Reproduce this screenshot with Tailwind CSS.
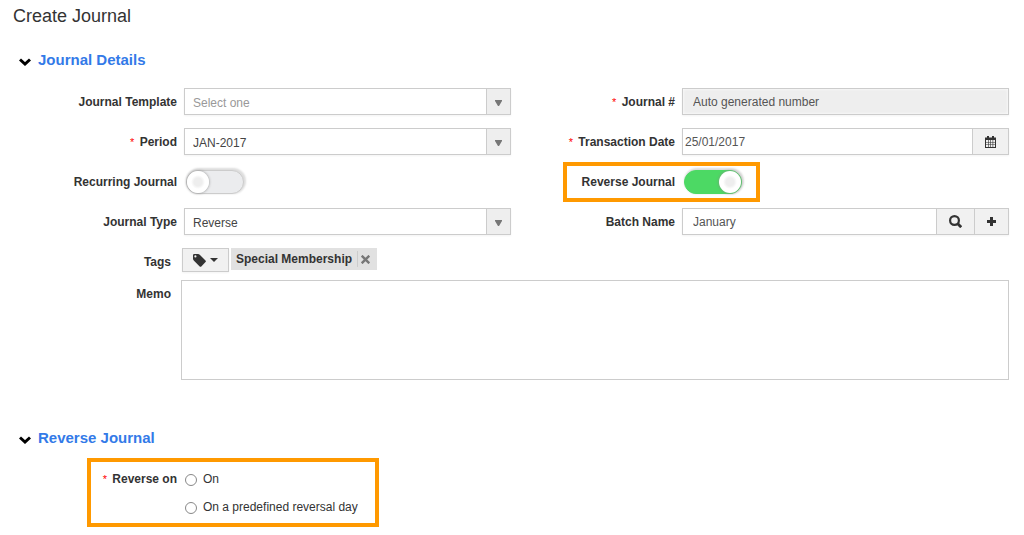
<!DOCTYPE html>
<html lang="en">
<head>
    <meta charset="UTF-8">
    <meta name="viewport" content="width=device-width, initial-scale=1.0">
    <title>Create Journal</title>
    <script src="https://cdn.jsdelivr.net/npm/@tailwindcss/browser@4"></script>
</head>
<body class="bg-white pl-[13px] pr-[15px] font-['Liberation_Sans',Arial,sans-serif] text-xs text-[#333]">

    <h1 class="pt-1 text-lg leading-6">Create Journal</h1>

    <form>
        <!-- Journal Details -->
        <h2 class="mt-5 pl-1.5">
            <button type="button" class="flex items-center gap-[7px] text-[15px] leading-6 font-bold text-[#337ae8]">
                <svg class="mt-1 w-3 h-2" viewBox="0 0 12 8" fill="none" stroke="#000" stroke-width="3"><path d="M1 1.500l5 4.500 5-4.500"/></svg>
                Journal Details
            </button>
        </h2>

        <div class="mt-4 grid grid-cols-2 gap-y-[13px]">
            <div class="flex items-center gap-[7px]">
                <label for="template" class="w-[164px] shrink-0 text-right font-bold">Journal Template</label>
                <div class="relative flex-1">
                    <select id="template" class="block w-full h-[27px] appearance-none border border-[#ccc] bg-white pl-2 pt-0.5 pr-8 text-[#999] shadow-xs">
                        <option>Select one</option>
                    </select>
                    <span class="pointer-events-none absolute inset-y-px right-px flex w-6 items-center justify-center border-l border-[#ccc] bg-[#eee] pt-0.5">
                        <svg class="w-[7px] h-[6px]" viewBox="0 0 7 6" fill="#777"><path d="M0 0h7v1L4 6H3L0 1z"/></svg>
                    </span>
                </div>
            </div>
            <div class="flex items-center gap-[7px]">
                <label for="number" class="w-[164px] shrink-0 text-right font-bold"><span class="mr-0.5 text-[11px] font-normal text-[#f00]">*</span> Journal #</label>
                <input id="number" type="text" value="Auto generated number" readonly class="h-[27px] min-w-0 flex-1 border border-[#ccc] bg-[#eee] px-2.5 text-[#555] shadow-xs inset-shadow-[0_0_3px_#fff]">
            </div>

            <div class="flex items-center gap-[7px]">
                <label for="period" class="w-[164px] shrink-0 text-right font-bold"><span class="mr-0.5 text-[11px] font-normal text-[#f00]">*</span> Period</label>
                <div class="relative flex-1">
                    <select id="period" class="block w-full h-[27px] appearance-none border border-[#ccc] bg-white pl-2 pt-0.5 pr-8 text-[#444] shadow-xs">
                        <option>JAN-2017</option>
                    </select>
                    <span class="pointer-events-none absolute inset-y-px right-px flex w-6 items-center justify-center border-l border-[#ccc] bg-[#eee] pt-0.5">
                        <svg class="w-[7px] h-[6px]" viewBox="0 0 7 6" fill="#777"><path d="M0 0h7v1L4 6H3L0 1z"/></svg>
                    </span>
                </div>
            </div>
            <div class="flex items-center gap-[7px]">
                <label for="date" class="w-[164px] shrink-0 text-right font-bold"><span class="mr-0.5 text-[11px] font-normal text-[#f00]">*</span> Transaction Date</label>
                <div class="flex min-w-0 flex-1 shadow-xs">
                    <input id="date" type="text" value="25/01/2017" class="h-[27px] min-w-0 flex-1 border border-r-0 border-[#ccc] px-0.5 text-[#555]">
                    <button type="button" aria-label="Pick a date" class="flex h-[27px] w-[37px] items-center justify-center border border-[#ccc] bg-[#f1f1f1]">
                        <svg class="w-[11px] h-3" viewBox="0 0 11 12">
                            <path d="M0 1.500h2V0h2v1.500h3V0h2v1.500h2V12H0z" fill="#333"/>
                            <path d="M1 4h2v2H1zM3.600 4h1.700v2H3.600zM5.900 4h1.700v2H5.900zM8.200 4H10v2H8.200zM1 6.600h2v1.800H1zM3.600 6.600h1.700v1.800H3.600zM5.900 6.600h1.700v1.800H5.900zM8.200 6.600H10v1.800H8.200zM1 9h2v2H1zM3.600 9h1.700v2H3.600zM5.900 9h1.700v2H5.900zM8.200 9H10v2H8.200z" fill="#f1f1f1"/>
                        </svg>
                    </button>
                </div>
            </div>

            <div class="flex items-center gap-[7px]">
                <label for="recurring" class="w-[164px] shrink-0 text-right font-bold">Recurring Journal</label>
                <div class="flex h-[27px] items-center pt-px">
                    <input id="recurring" type="checkbox" role="switch" class="ml-0.5 flex h-6 w-[58px] appearance-none items-center rounded-full border border-[#ccc] bg-[#ebecee] shadow-[1px_-1px_2px_1px_#ddd] before:size-[22px] before:rounded-full before:bg-[radial-gradient(circle,#eee_0_4px,#fff_7px)] before:shadow-[0_0_3px_#888] checked:justify-end checked:border-[#4cd964] checked:bg-[#4cd964]">
                </div>
            </div>
            <div class="relative flex items-center gap-[7px]">
                <div class="pointer-events-none absolute -top-1.5 left-[52px] h-10 w-[197px] border-4 border-[#f90]"></div>
                <label for="reverse" class="w-[164px] shrink-0 text-right font-bold">Reverse Journal</label>
                <div class="flex h-[27px] items-center pt-px">
                    <input id="reverse" type="checkbox" role="switch" checked class="ml-0.5 flex h-6 w-[58px] appearance-none items-center rounded-full border border-[#ccc] bg-[#ebecee] shadow-[1px_-1px_2px_1px_#ddd] before:size-[22px] before:rounded-full before:bg-[radial-gradient(circle,#eee_0_4px,#fff_7px)] before:shadow-[0_0_3px_#888] checked:justify-end checked:border-[#4cd964] checked:bg-[#4cd964]">
                </div>
            </div>

            <div class="flex items-center gap-[7px]">
                <label for="type" class="w-[164px] shrink-0 text-right font-bold">Journal Type</label>
                <div class="relative flex-1">
                    <select id="type" class="block w-full h-[27px] appearance-none border border-[#ccc] bg-white pl-2 pt-0.5 pr-8 text-[#444] shadow-xs">
                        <option>Reverse</option>
                    </select>
                    <span class="pointer-events-none absolute inset-y-px right-px flex w-6 items-center justify-center border-l border-[#ccc] bg-[#eee] pt-0.5">
                        <svg class="w-[7px] h-[6px]" viewBox="0 0 7 6" fill="#777"><path d="M0 0h7v1L4 6H3L0 1z"/></svg>
                    </span>
                </div>
            </div>
            <div class="flex items-center gap-[7px]">
                <label for="batch" class="w-[164px] shrink-0 text-right font-bold">Batch Name</label>
                <div class="flex min-w-0 flex-1 shadow-xs">
                    <input id="batch" type="text" value="January" class="h-[27px] min-w-0 flex-1 border border-r-0 border-[#ccc] px-2.5 text-[#555]">
                    <button type="button" aria-label="Search" class="flex h-[27px] w-[38px] items-center justify-center border border-r-0 border-[#ccc] bg-[#f1f1f1]">
                        <svg class="w-[13px] h-[13px]" viewBox="0 0 13 13" fill="none" stroke="#333" stroke-width="2.200"><circle cx="5.500" cy="5.500" r="4.400"/><path d="M8.500 8.500l3.700 3.700" stroke-width="2.800"/></svg>
                    </button>
                    <button type="button" aria-label="Add" class="flex h-[27px] w-[35px] items-center justify-center border border-[#ccc] bg-[#f1f1f1]">
                        <svg class="w-[9px] h-[9px]" viewBox="0 0 9 9" fill="#333"><path d="M3 0h3v3h3v3H6v3H3V6H0V3h3z"/></svg>
                    </button>
                </div>
            </div>
        </div>

        <!-- Tags -->
        <div class="mt-[13px] flex items-start">
            <span class="w-[158px] shrink-0 pt-1.5 text-right font-bold">Tags</span>
            <button type="button" aria-label="Choose tags" class="ml-[11px] flex h-6 w-[47px] items-center justify-center gap-1 border border-[#ccc] bg-[#f1f1f1] shadow-xs">
                <svg class="w-[13px] h-[13px]" viewBox="0 0 13 13" fill="#333"><path fill-rule="evenodd" d="M0 1.200Q0 0 1.200 0H5Q6 0 7 1l5.500 5.500q.8.800 0 1.600L8.300 12.400q-.8.800-1.600 0L1 6.800Q0 5.800 0 4.800zM2.400 1.300a1.100 1.100 0 1 0 0 2.200 1.100 1.100 0 0 0 0-2.200z"/></svg>
                <svg class="w-2 h-1" viewBox="0 0 8 4" fill="#333"><path d="M0 0h8L4 4z"/></svg>
            </button>
            <span class="ml-0.5 flex h-[22px] items-center bg-[#e1e1e1] pl-[5px] font-bold">
                Special Membership
                <button type="button" aria-label="Remove Special Membership" class="ml-[5px] flex h-4 w-5 items-center border-l border-[#ccc] pl-[3px]">
                    <svg class="w-[9px] h-[9px]" viewBox="0 0 9 9" fill="none" stroke="#777" stroke-width="2.400"><path d="M.7.700l7.600 7.600M8.300.700L.7 8.300"/></svg>
                </button>
            </span>
        </div>

        <!-- Memo -->
        <div class="mt-2 flex items-start">
            <label for="memo" class="w-[158px] shrink-0 pt-1.5 text-right font-bold">Memo</label>
            <textarea id="memo" class="ml-2.5 block h-[100px] flex-1 resize-none border border-[#ccc] p-2"></textarea>
        </div>

        <!-- Reverse Journal -->
        <h2 class="mt-[46px] pl-1.5">
            <button type="button" class="flex items-center gap-[7px] text-[15px] leading-6 font-bold text-[#337ae8]">
                <svg class="mt-1 w-3 h-2" viewBox="0 0 12 8" fill="none" stroke="#000" stroke-width="3"><path d="M1 1.500l5 4.500 5-4.500"/></svg>
                Reverse Journal
            </button>
        </h2>

        <div role="radiogroup" aria-labelledby="reverse-on" class="mt-2 ml-[74px] flex h-[69px] w-[292px] gap-2 border-4 border-[#f90] pt-[9px]">
            <span id="reverse-on" class="w-[86px] shrink-0 text-right font-bold"><span class="mr-0.5 text-[11px] font-normal text-[#f00]">*</span> Reverse on</span>
            <div class="flex flex-col gap-3">
                <label class="flex items-center gap-1.5 whitespace-nowrap">
                    <input type="radio" name="reverse_on" class="mt-0.5 size-3 appearance-none rounded-full border border-[#888] bg-white checked:border-4">
                    On
                </label>
                <label class="flex items-center gap-1.5 whitespace-nowrap">
                    <input type="radio" name="reverse_on" class="mt-0.5 size-3 appearance-none rounded-full border border-[#888] bg-white checked:border-4">
                    On a predefined reversal day
                </label>
            </div>
        </div>
    </form>

</body>
</html>
